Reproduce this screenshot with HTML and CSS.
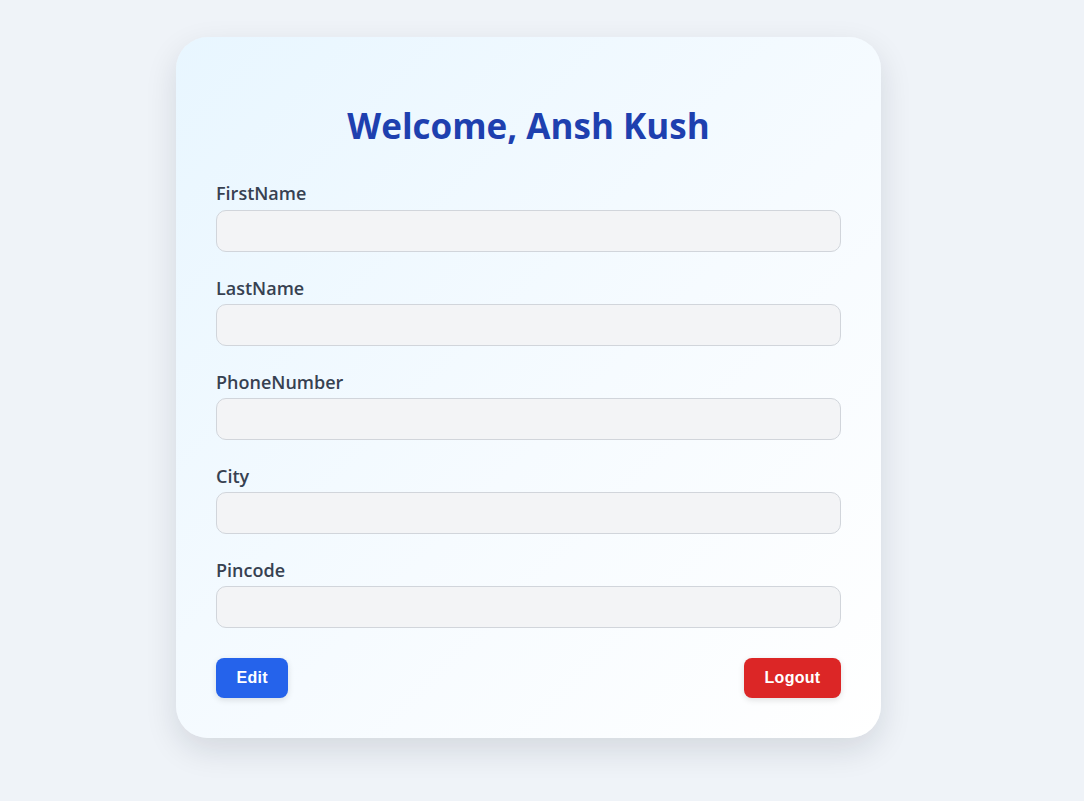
FILE: index.html
```html
<!DOCTYPE html>
<html lang="en">
<head>
<meta charset="utf-8">
<title>Profile</title>
<link rel="stylesheet" href="styles.css">
</head>
<body>
<main class="card">
  <h1 class="title">Welcome, Ansh Kush</h1>
  <form class="form">
    <div class="field">
      <label class="label" for="fn">FirstName</label>
      <input class="input" id="fn" type="text">
    </div>
    <div class="field">
      <label class="label" for="ln">LastName</label>
      <input class="input" id="ln" type="text">
    </div>
    <div class="field">
      <label class="label" for="ph">PhoneNumber</label>
      <input class="input" id="ph" type="text">
    </div>
    <div class="field">
      <label class="label" for="ci">City</label>
      <input class="input" id="ci" type="text">
    </div>
    <div class="field">
      <label class="label" for="pc">Pincode</label>
      <input class="input" id="pc" type="text">
    </div>
    <div class="actions">
      <button type="button" class="btn btn-edit">Edit</button>
      <button type="button" class="btn btn-logout">Logout</button>
    </div>
  </form>
</main>
</body>
</html>
```
FILE: styles.css
```css
html, body {
  margin: 0;
  padding: 0;
}
body {
  background: #eff3f8;
  font-family: "Open Sans", "Noto Sans", sans-serif;
  min-height: 801px;
  padding-top: 37px;
  box-sizing: border-box;
}
.card {
  box-sizing: border-box;
  width: 705px;
  margin-left: 176px;
  padding: 40px;
  border-radius: 32px;
  background: linear-gradient(135deg, #e8f6ff 0%, #f6fbff 55%, #ffffff 100%);
  box-shadow: 0 12px 32px rgba(15, 23, 42, 0.12);
}
.title {
  margin: 25px 0 31px;
  font-size: 35px;
  line-height: 48px;
  font-weight: 700;
  color: #1e40af;
  text-align: center;
}
.form {
  margin: 0;
}
.field {
  margin-bottom: 24px;
}
.label {
  display: block;
  font-size: 18px;
  line-height: 24px;
  font-weight: 600;
  color: #374151;
  margin-bottom: 4px;
}
.field:first-child .label {
  margin-bottom: 5px;
}
.input {
  display: block;
  box-sizing: border-box;
  width: 100%;
  height: 42px;
  border: 1px solid #d1d5db;
  border-radius: 10px;
  background: #f3f4f6;
  outline: none;
  padding: 0 12px;
  font-size: 16px;
}
.actions {
  display: flex;
  justify-content: space-between;
  margin-top: 30px;
}
.btn {
  height: 40px;
  padding: 0 20.5px;
  border: none;
  border-radius: 8px;
  color: #ffffff;
  font-family: "Liberation Sans", Arial, sans-serif;
  font-size: 16px;
  font-weight: 700;
  letter-spacing: 0.3px;
  box-shadow: 0 2px 6px rgba(0, 0, 0, 0.12);
  cursor: pointer;
}
.btn-edit {
  background: #2563eb;
}
.btn-logout {
  background: #dc2626;
}
```
